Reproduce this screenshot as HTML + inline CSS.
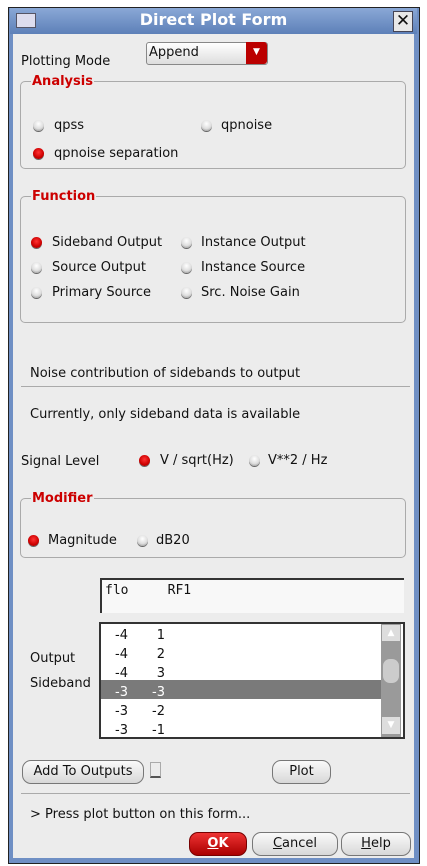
<!DOCTYPE html><html><head><style>
body{margin:0;width:427px;height:866px;background:#fff;font-family:"DejaVu Sans","Liberation Sans",sans-serif;font-size:13px;line-height:20px;color:#111;position:relative;overflow:hidden}
.a{position:absolute;white-space:nowrap}
#win{position:absolute;left:8px;top:7px;width:410px;height:855px;background:#6f8fc4;border:1px solid #222}
#body{position:absolute;left:13px;top:34px;width:401px;height:824px;background:#ececec}
.grp{position:absolute;border:1px solid #aaa;border-radius:5px}
.leg{position:absolute;color:#c00;font-weight:bold;background:#ececec;padding:0 1px;line-height:16px}
.r{position:absolute;width:11px;height:11px;border-radius:50%;background:radial-gradient(circle at 50% 35%,#fff,#ddd 55%,#777);box-shadow:0 1px 0 #666}
.r.on{background:radial-gradient(circle at 50% 40%,#f33,#c00 60%,#700)}
.btn{position:absolute;border:1px solid #777;border-radius:9px;background:linear-gradient(#fafafa,#d8d8d8);text-align:center;line-height:22px;height:22px}
.mono{font-family:"DejaVu Sans Mono","Liberation Mono",monospace}
</style></head><body>
<div id="win"></div>
<div class="a" style="left:10px;top:8px;width:407px;height:26px;background:linear-gradient(#8aa8d6,#5d80b8)"></div>
<div class="a" style="left:16px;top:13px;width:18px;height:13px;background:#dde;border:1px solid #556"></div>
<div class="a" style="left:0;width:427px;top:10px;text-align:center;color:#fff;font-weight:bold;font-size:16px">Direct Plot Form</div>
<div class="a" style="left:393px;top:11px;width:18px;height:19px;background:#e8e8e8;border:1px solid #445;font-size:17px;font-weight:bold;line-height:19px;text-align:center">✕</div>
<div id="body"></div>
<div class="a" style="left:21px;top:52px">Plotting Mode</div>
<div class="a" style="left:146px;top:42px;width:120px;height:21px;border:1px solid #888;border-radius:3px;background:linear-gradient(#fff,#ddd)"></div>
<div class="a" style="left:149px;top:43px">Append</div>
<div class="a" style="left:246px;top:42px;width:21px;height:22px;background:#b00;border-radius:0 3px 3px 0;color:#fff;font-size:9px;text-align:center;line-height:20px">▼</div>

<div class="grp" style="left:20px;top:81px;width:384px;height:86px"></div>
<div class="leg" style="left:31px;top:74px">Analysis</div>
<div class="r" style="left:33px;top:120px"></div><div class="a" style="left:54px;top:116px">qpss</div>
<div class="r" style="left:201px;top:120px"></div><div class="a" style="left:221px;top:116px">qpnoise</div>
<div class="r on" style="left:33px;top:148px"></div><div class="a" style="left:54px;top:144px">qpnoise separation</div>

<div class="grp" style="left:20px;top:196px;width:384px;height:125px"></div>
<div class="leg" style="left:31px;top:189px">Function</div>
<div class="r on" style="left:31px;top:237px"></div><div class="a" style="left:52px;top:233px">Sideband Output</div>
<div class="r" style="left:181px;top:237px"></div><div class="a" style="left:201px;top:233px">Instance Output</div>
<div class="r" style="left:31px;top:262px"></div><div class="a" style="left:52px;top:258px">Source Output</div>
<div class="r" style="left:181px;top:262px"></div><div class="a" style="left:201px;top:258px">Instance Source</div>
<div class="r" style="left:31px;top:287px"></div><div class="a" style="left:52px;top:283px">Primary Source</div>
<div class="r" style="left:181px;top:287px"></div><div class="a" style="left:201px;top:283px">Src. Noise Gain</div>

<div class="a" style="left:30px;top:364px">Noise contribution of sidebands to output</div>
<div class="a" style="left:21px;top:386px;width:389px;height:1px;background:#aaa"></div>
<div class="a" style="left:30px;top:405px">Currently, only sideband data is available</div>
<div class="a" style="left:21px;top:452px">Signal Level</div>
<div class="r on" style="left:139px;top:455px"></div><div class="a" style="left:160px;top:451px">V / sqrt(Hz)</div>
<div class="r" style="left:249px;top:455px"></div><div class="a" style="left:268px;top:451px">V**2 / Hz</div>

<div class="grp" style="left:20px;top:498px;width:384px;height:58px"></div>
<div class="leg" style="left:31px;top:491px">Modifier</div>
<div class="r on" style="left:28px;top:535px"></div><div class="a" style="left:48px;top:531px">Magnitude</div>
<div class="r" style="left:137px;top:535px"></div><div class="a" style="left:156px;top:531px">dB20</div>

<div class="a" style="left:100px;top:578px;width:302px;height:33px;background:#f8f8f8;border-top:2px solid #333;border-left:2px solid #333"></div>
<div class="a mono" style="left:105px;top:581px">flo&nbsp;&nbsp;&nbsp;&nbsp;&nbsp;RF1</div>
<div class="a" style="left:99px;top:622px;width:302px;height:113px;border:2px solid #333;background:#fff"></div>
<div class="a" style="left:101px;top:680px;width:280px;height:19px;background:#7a7a7a"></div>
<div class="a" style="left:381px;top:624px;width:20px;height:113px;background:#9a9a9a"></div>
<div class="a" style="left:382px;top:625px;width:18px;height:16px;background:#ddd;font-size:9px;text-align:center;color:#fff;line-height:16px">▲</div>
<div class="a" style="left:382px;top:717px;width:18px;height:17px;background:#ddd;font-size:9px;text-align:center;color:#fff;line-height:17px">▼</div>
<div class="a" style="left:383px;top:659px;width:16px;height:24px;border-radius:7px;background:#ccc"></div>
<div class="a" style="left:115px;top:626px;line-height:19px">-4<br>-4<br>-4<br><span style="color:#fff">-3</span><br>-3<br>-3</div>
<div class="a" style="left:147px;top:626px;line-height:19px;text-align:right;width:18px">1<br>2<br>3<br><span style="color:#fff">-3</span><br>-2<br>-1</div>
<div class="a" style="left:30px;top:649px">Output</div>
<div class="a" style="left:30px;top:674px">Sideband</div>

<div class="btn" style="left:22px;top:760px;width:120px">Add To Outputs</div>
<div class="a" style="left:150px;top:762px;width:9px;height:13px;border:1px solid #aaa;border-bottom:2px solid #555"></div>
<div class="btn" style="left:272px;top:760px;width:57px">Plot</div>
<div class="a" style="left:21px;top:793px;width:389px;height:1px;background:#aaa"></div>
<div class="a" style="left:30px;top:805px">&gt; Press plot button on this form...</div>
<div class="btn" style="left:189px;top:832px;width:56px;background:linear-gradient(#e33,#a00);color:#fff;font-weight:bold;border-color:#700"><u>O</u>K</div>
<div class="btn" style="left:252px;top:832px;width:84px"><u>C</u>ancel</div>
<div class="btn" style="left:341px;top:832px;width:68px"><u>H</u>elp</div>
</body></html>
